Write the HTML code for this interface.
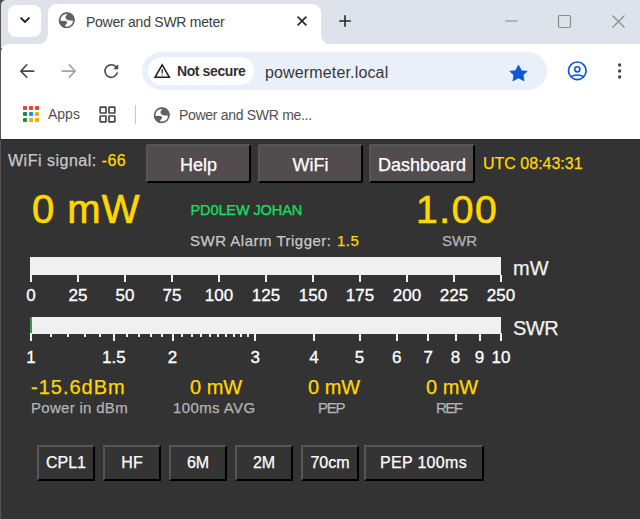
<!DOCTYPE html>
<html><head><meta charset="utf-8">
<style>
*{margin:0;padding:0;box-sizing:border-box}
html,body{width:640px;height:519px;overflow:hidden;background:#333}
body{position:relative;font-family:"Liberation Sans",sans-serif}
.a{position:absolute;white-space:nowrap;line-height:1}
#strip{position:absolute;left:1px;top:0;width:639px;height:48px;background:#dee3eb;border-top-left-radius:5px}
#toolbar{position:absolute;left:1px;top:44px;width:639px;height:95px;background:#fff;border-top-left-radius:8px}
#sep{position:absolute;left:0;top:139px;width:640px;height:1px;background:#2a2a2a}
#winedge{position:absolute;left:0;top:0;width:1.4px;height:519px;background:#555}
.btn{position:absolute;background:#524c4f;border-style:solid;border-width:2px;border-radius:2px;border-color:#555756 #000 #000 #555756;color:#fff;font-size:18px;text-align:center}
.sbtn{position:absolute;background:#343434;border-style:solid;border-width:2px;border-radius:1px;border-color:#555 #000 #000 #555;color:#fff;font-size:16px;text-align:center}
.y{color:#ffd700}
#sep ~ .a,.btn,.sbtn{-webkit-text-stroke:0.25px currentColor}
.g{color:#c8c8c8}
.lbl{color:#b4b4b4}
.tick{position:absolute;background:#f0f0f0;width:2px}
.num{position:absolute;color:#fff;font-size:17px;line-height:1;white-space:nowrap;transform:translateX(-50%);-webkit-text-stroke:0.3px #fff}
</style></head><body>
<div style="position:absolute;left:0;top:0;width:8px;height:8px;background:#4a4a4a"></div><div id="strip"></div>
<div style="position:absolute;left:8px;top:5px;width:33px;height:32px;background:#fff;border-radius:8px"></div>
<svg style="position:absolute;left:19px;top:15px" width="12" height="10" viewBox="0 0 12 10"><path d="M1.6 2.6 L6 7 L10.4 2.6" fill="none" stroke="#1f1f1f" stroke-width="1.9"/></svg>
<div id="toolbar"></div>
<svg style="position:absolute;left:34px;top:4px" width="312" height="41" viewBox="0 0 312 41">
<path d="M0 41 Q14 41 14 29 L14 10 Q14 0 24 0 L277 0 Q287 0 287 10 L287 29 Q287 41 299 41 Z" fill="#fff"/>
</svg>
<svg style="position:absolute;left:56px;top:10.3px" width="22.00" height="22.00" viewBox="0 0 519 519"><defs><clipPath id="gc56"><circle cx="255" cy="242" r="192"/></clipPath></defs><g clip-path="url(#gc56)"><circle cx="255" cy="242" r="192" fill="#5f6368"/><circle cx="255" cy="242" r="148" fill="#fff"/><path d="M280 80C250 120 215 145 225 180C235 220 265 240 330 248L440 252L440 40Z" fill="#5f6368"/><path d="M60 256L235 258C272 275 268 308 246 328C220 350 205 370 212 440L60 440Z" fill="#5f6368"/></g></svg>
<div class="a" style="left:86px;top:15px;font-size:14px;color:#3c3c3c;letter-spacing:-0.25px">Power and SWR meter</div>
<svg style="position:absolute;left:296px;top:15px" width="12" height="12" viewBox="0 0 12 12"><path d="M1.6 1.6L10.4 10.4M10.4 1.6L1.6 10.4" stroke="#262626" stroke-width="1.6"/></svg>
<svg style="position:absolute;left:338px;top:14px" width="14" height="14" viewBox="0 0 14 14"><path d="M7 1.2V12.8M1.2 7H12.8" stroke="#262626" stroke-width="1.6"/></svg>
<svg style="position:absolute;left:500px;top:10px" width="130" height="24" viewBox="0 0 130 24">
<path d="M5 11H17.5" stroke="#8a8d91" stroke-width="1.1"/>
<rect x="58.5" y="5.5" width="12" height="12" rx="1.5" fill="none" stroke="#8a8d91" stroke-width="1.2"/>
<path d="M112.5 5.5L124.5 17.5M124.5 5.5L112.5 17.5" stroke="#8a8d91" stroke-width="1.2"/>
</svg>
<svg style="position:absolute;left:14px;top:58px" width="26" height="26" viewBox="0 0 26 26"><path d="M19.8 13.1H7.2M12.8 6.8L6.8 13.1L12.8 19.3" fill="none" stroke="#474747" stroke-width="1.6" stroke-linecap="round" stroke-linejoin="round"/></svg>
<svg style="position:absolute;left:56px;top:58px" width="26" height="26" viewBox="0 0 26 26"><path d="M6.2 13.1H18.8M13.2 6.8L19.2 13.1L13.2 19.3" fill="none" stroke="#a3a3a3" stroke-width="1.6" stroke-linecap="round" stroke-linejoin="round"/></svg>
<svg style="position:absolute;left:100px;top:60px" width="24" height="24" viewBox="0 0 24 24"><path d="M15.98 6.78A6.3 6.3 0 1 0 17.44 12.42" fill="none" stroke="#474747" stroke-width="1.6"/><path d="M18.2 4.2V9.3H13.1Z" fill="#474747"/></svg>
<div style="position:absolute;left:142px;top:52px;width:405px;height:38px;border-radius:19px;background:#eaf0f9"></div>
<div style="position:absolute;left:148px;top:57px;width:106px;height:28px;border-radius:14px;background:#fff"></div>
<svg style="position:absolute;left:153px;top:63px" width="18" height="16" viewBox="0 0 18 16"><path d="M9.2 1.8L16.4 14.3H2Z" fill="none" stroke="#1f1f1f" stroke-width="1.5" stroke-linejoin="miter"/><path d="M9.2 6.2V10.2M9.2 11.4V12.6" stroke="#1f1f1f" stroke-width="1.3"/></svg>
<div class="a" style="left:177px;top:64px;font-size:14px;font-weight:bold;color:#303030;letter-spacing:-0.4px">Not secure</div>
<div class="a" style="left:265px;top:64.5px;font-size:16px;color:#383838;letter-spacing:0.15px">powermeter.local</div>
<svg style="position:absolute;left:506px;top:60px" width="26" height="26" viewBox="0 0 26 26"><path d="M12.5 5L15.6 10.7L21.3 11.2L17.2 15L18.1 21L12.5 17.9L6.9 21L7.8 15L3.7 11.2L9.4 10.7Z" fill="#0b57d0" stroke="#0b57d0" stroke-width="0.6" stroke-linejoin="round"/></svg>
<svg style="position:absolute;left:566px;top:60px" width="22" height="22" viewBox="0 0 22 22"><circle cx="11.3" cy="10.8" r="8.8" fill="none" stroke="#0b57d0" stroke-width="1.7"/><circle cx="11.3" cy="9.3" r="2.6" fill="none" stroke="#0b57d0" stroke-width="1.6"/><path d="M4.6 16.6Q11.3 13.4 18 16.6" fill="none" stroke="#0b57d0" stroke-width="1.6"/></svg>
<svg style="position:absolute;left:616px;top:61px" width="8" height="20" viewBox="0 0 8 20"><circle cx="3.6" cy="4" r="1.7" fill="#474747"/><circle cx="3.6" cy="10" r="1.7" fill="#474747"/><circle cx="3.6" cy="16" r="1.7" fill="#474747"/></svg>
<svg style="position:absolute;left:23px;top:106px" width="16" height="16" viewBox="0 0 16 16">
<rect x="0" y="0" width="4" height="4" rx=".8" fill="#ea4335"/><rect x="6" y="0" width="4" height="4" rx=".8" fill="#ea4335"/><rect x="12" y="0" width="4" height="4" rx=".8" fill="#ea4335"/>
<rect x="0" y="6" width="4" height="4" rx=".8" fill="#1e8e3e"/><rect x="6" y="6" width="4" height="4" rx=".8" fill="#1a8cff"/><rect x="12" y="6" width="4" height="4" rx=".8" fill="#f9ab00"/>
<rect x="0" y="12" width="4" height="4" rx=".8" fill="#1e8e3e"/><rect x="6" y="12" width="4" height="4" rx=".8" fill="#f9ab00"/><rect x="12" y="12" width="4" height="4" rx=".8" fill="#f9ab00"/>
</svg>
<div class="a" style="left:48px;top:107px;font-size:14px;color:#505050">Apps</div>
<svg style="position:absolute;left:99px;top:106px" width="18" height="18" viewBox="0 0 18 18" fill="none" stroke="#474747" stroke-width="1.7"><rect x="1.2" y="1.2" width="5.8" height="5.8" rx=".3"/><rect x="10" y="1.2" width="5.8" height="5.8" rx=".3"/><rect x="1.2" y="10" width="5.8" height="5.8" rx=".3"/><rect x="10" y="10" width="5.8" height="5.8" rx=".3"/></svg>
<div style="position:absolute;left:135px;top:105px;width:1px;height:19px;background:#b4cbf0"></div>
<svg style="position:absolute;left:151px;top:104.5px" width="22.00" height="22.00" viewBox="0 0 519 519"><defs><clipPath id="gc151"><circle cx="255" cy="242" r="192"/></clipPath></defs><g clip-path="url(#gc151)"><circle cx="255" cy="242" r="192" fill="#5f6368"/><circle cx="255" cy="242" r="148" fill="#fff"/><path d="M280 80C250 120 215 145 225 180C235 220 265 240 330 248L440 252L440 40Z" fill="#5f6368"/><path d="M60 256L235 258C272 275 268 308 246 328C220 350 205 370 212 440L60 440Z" fill="#5f6368"/></g></svg>
<div class="a" style="left:179px;top:107.5px;font-size:14px;color:#505050;letter-spacing:-0.3px">Power and SWR me...</div>
<div id="winedge"></div>
<div id="sep"></div>

<!-- PAGE -->
<div class="a g" style="left:8px;top:152.5px;font-size:16px;letter-spacing:0.5px">WiFi signal: <span class="y">-66</span></div>
<div class="btn" style="left:146px;top:144px;width:105px;height:39px;line-height:39px">Help</div>
<div class="btn" style="left:258px;top:144px;width:105px;height:39px;line-height:39px">WiFi</div>
<div class="btn" style="left:369px;top:144px;width:106px;height:39px;line-height:39px">Dashboard</div>
<div class="a y" style="left:483px;top:156px;font-size:16px">UTC 08:43:31</div>

<div class="a y" style="left:32px;top:188.5px;font-size:40px;letter-spacing:1px;-webkit-text-stroke:0.7px #ffd700">0 mW</div>
<div class="a" style="left:190.5px;top:202.5px;font-size:14.5px;color:#14e060;letter-spacing:-0.1px">PD0LEW JOHAN</div>
<div class="a g" style="left:190px;top:233px;font-size:15px;letter-spacing:0.5px">SWR Alarm Trigger:</div><div class="a y" style="left:337px;top:233px;font-size:15px;letter-spacing:0.5px">1.5</div>
<div class="a y" style="left:416px;top:190px;font-size:39px;letter-spacing:1.6px;-webkit-text-stroke:0.7px #ffd700">1.00</div>
<div class="a lbl" style="left:442px;top:233px;font-size:15px">SWR</div>

<!-- mW bar -->
<div style="position:absolute;left:30px;top:257px;width:471px;height:18px;background:#f0f0f0"></div>
<div class="a" style="left:513px;top:258px;font-size:20px;color:#f0f0f0">mW</div>
<div class="tick" style="left:30.0px;top:275px;height:7px"></div><div class="num" style="left:31.0px;top:287px">0</div><div class="tick" style="left:77.0px;top:275px;height:7px"></div><div class="num" style="left:78.0px;top:287px">25</div><div class="tick" style="left:124.0px;top:275px;height:7px"></div><div class="num" style="left:125.0px;top:287px">50</div><div class="tick" style="left:171.0px;top:275px;height:7px"></div><div class="num" style="left:172.0px;top:287px">75</div><div class="tick" style="left:218.0px;top:275px;height:7px"></div><div class="num" style="left:219.0px;top:287px">100</div><div class="tick" style="left:265.0px;top:275px;height:7px"></div><div class="num" style="left:266.0px;top:287px">125</div><div class="tick" style="left:312.0px;top:275px;height:7px"></div><div class="num" style="left:313.0px;top:287px">150</div><div class="tick" style="left:359.0px;top:275px;height:7px"></div><div class="num" style="left:360.0px;top:287px">175</div><div class="tick" style="left:406.0px;top:275px;height:7px"></div><div class="num" style="left:407.0px;top:287px">200</div><div class="tick" style="left:453.0px;top:275px;height:7px"></div><div class="num" style="left:454.0px;top:287px">225</div><div class="tick" style="left:500.0px;top:275px;height:7px"></div><div class="num" style="left:501.0px;top:287px">250</div>
<!-- SWR bar -->
<div style="position:absolute;left:30px;top:316.5px;width:471px;height:17px;background:#f0f0f0"></div>
<div style="position:absolute;left:30px;top:316.5px;width:2px;height:17px;background:#35975a"></div>
<div class="a" style="left:513px;top:318px;font-size:20px;color:#f0f0f0;letter-spacing:-0.5px">SWR</div>
<div class="tick" style="left:30.0px;top:333px;height:8px"></div><div class="num" style="left:31.0px;top:349px">1</div><div class="tick" style="left:112.8px;top:333px;height:8px"></div><div class="num" style="left:113.8px;top:349px">1.5</div><div class="tick" style="left:171.5px;top:333px;height:8px"></div><div class="num" style="left:172.5px;top:349px">2</div><div class="tick" style="left:254.2px;top:333px;height:8px"></div><div class="num" style="left:255.2px;top:349px">3</div><div class="tick" style="left:313.0px;top:333px;height:8px"></div><div class="num" style="left:314.0px;top:349px">4</div><div class="tick" style="left:358.5px;top:333px;height:8px"></div><div class="num" style="left:359.5px;top:349px">5</div><div class="tick" style="left:395.7px;top:333px;height:8px"></div><div class="num" style="left:396.7px;top:349px">6</div><div class="tick" style="left:427.2px;top:333px;height:8px"></div><div class="num" style="left:428.2px;top:349px">7</div><div class="tick" style="left:454.5px;top:333px;height:8px"></div><div class="num" style="left:455.5px;top:349px">8</div><div class="tick" style="left:478.5px;top:333px;height:8px"></div><div class="num" style="left:479.5px;top:349px">9</div><div class="tick" style="left:500.0px;top:333px;height:8px"></div><div class="num" style="left:501.0px;top:349px">10</div><div class="tick" style="left:49.5px;top:333px;height:4px"></div><div class="tick" style="left:67.2px;top:333px;height:4px"></div><div class="tick" style="left:83.6px;top:333px;height:4px"></div><div class="tick" style="left:98.7px;top:333px;height:4px"></div><div class="tick" style="left:125.9px;top:333px;height:4px"></div><div class="tick" style="left:138.3px;top:333px;height:4px"></div><div class="tick" style="left:150.0px;top:333px;height:4px"></div><div class="tick" style="left:161.0px;top:333px;height:4px"></div><div class="tick" style="left:181.4px;top:333px;height:4px"></div><div class="tick" style="left:190.9px;top:333px;height:4px"></div><div class="tick" style="left:200.0px;top:333px;height:4px"></div><div class="tick" style="left:208.7px;top:333px;height:4px"></div><div class="tick" style="left:217.0px;top:333px;height:4px"></div><div class="tick" style="left:225.0px;top:333px;height:4px"></div><div class="tick" style="left:232.7px;top:333px;height:4px"></div><div class="tick" style="left:240.2px;top:333px;height:4px"></div><div class="tick" style="left:247.3px;top:333px;height:4px"></div>

<!-- stats -->
<div class="a y" style="left:31px;top:377px;font-size:20px;letter-spacing:1px">-15.6dBm</div>
<div class="a lbl" style="left:31px;top:399.5px;font-size:15px;letter-spacing:0.3px">Power in dBm</div>
<div class="a y" style="left:190px;top:377px;font-size:20px">0 mW</div>
<div class="a lbl" style="left:173px;top:399.5px;font-size:15px;letter-spacing:0.4px">100ms AVG</div>
<div class="a y" style="left:308px;top:377px;font-size:20px">0 mW</div>
<div class="a lbl" style="left:318px;top:399.5px;font-size:15px;letter-spacing:-1.2px">PEP</div>
<div class="a y" style="left:426px;top:377px;font-size:20px">0 mW</div>
<div class="a lbl" style="left:436px;top:399.5px;font-size:15px;letter-spacing:-1.5px">REF</div>

<!-- bottom buttons -->
<div class="sbtn" style="left:37px;top:445px;width:58px;height:36px;line-height:32px">CPL1</div>
<div class="sbtn" style="left:103px;top:445px;width:58px;height:36px;line-height:32px">HF</div>
<div class="sbtn" style="left:169px;top:445px;width:58px;height:36px;line-height:32px">6M</div>
<div class="sbtn" style="left:235px;top:445px;width:58px;height:36px;line-height:32px">2M</div>
<div class="sbtn" style="left:301px;top:445px;width:58px;height:36px;line-height:32px">70cm</div>
<div class="sbtn" style="left:364px;top:445px;width:120px;height:36px;line-height:32px;letter-spacing:0.3px;text-indent:-1px">PEP 100ms</div>
</body></html>
